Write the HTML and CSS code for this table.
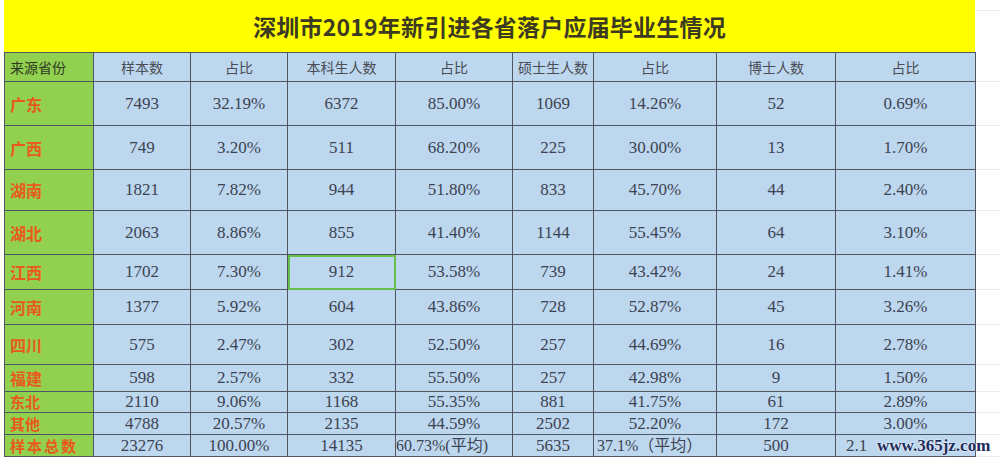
FILE: index.html
```html
<!DOCTYPE html>
<html lang="zh-CN">
<head>
<meta charset="utf-8">
<title>深圳市2019年新引进各省落户应届毕业生情况</title>
<link rel="stylesheet" href="styles.css">
</head>
<body>
<div class="sheet">
  <div class="title-row">
    <div class="title">深圳市2019年新引进各省落户应届毕业生情况</div>
    <div class="ghost-title"></div>
  </div>
  <table class="grid">
    <colgroup>
      <col class="c1"><col class="c2"><col class="c3"><col class="c4"><col class="c5"><col class="c6"><col class="c7"><col class="c8"><col class="c9"><col class="cg">
    </colgroup>
    <tr class="r29 head">
      <td class="prov-head">来源省份</td><td>样本数</td><td>占比</td><td>本科生人数</td><td>占比</td><td>硕士生人数</td><td>占比</td><td>博士人数</td><td>占比</td><td class="ghost"></td>
    </tr>
    <tr class="r44">
      <td class="prov">广东</td><td>7493</td><td>32.19%</td><td>6372</td><td>85.00%</td><td>1069</td><td>14.26%</td><td>52</td><td>0.69%</td><td class="ghost"></td>
    </tr>
    <tr class="r44">
      <td class="prov">广西</td><td>749</td><td>3.20%</td><td>511</td><td>68.20%</td><td>225</td><td>30.00%</td><td>13</td><td>1.70%</td><td class="ghost"></td>
    </tr>
    <tr class="r41">
      <td class="prov">湖南</td><td>1821</td><td>7.82%</td><td>944</td><td>51.80%</td><td>833</td><td>45.70%</td><td>44</td><td>2.40%</td><td class="ghost"></td>
    </tr>
    <tr class="r45">
      <td class="prov">湖北</td><td>2063</td><td>8.86%</td><td>855</td><td>41.40%</td><td>1144</td><td>55.45%</td><td>64</td><td>3.10%</td><td class="ghost"></td>
    </tr>
    <tr class="r35">
      <td class="prov">江西</td><td>1702</td><td>7.30%</td><td class="sel">912</td><td>53.58%</td><td>739</td><td>43.42%</td><td>24</td><td>1.41%</td><td class="ghost"></td>
    </tr>
    <tr class="r35">
      <td class="prov">河南</td><td>1377</td><td>5.92%</td><td>604</td><td>43.86%</td><td>728</td><td>52.87%</td><td>45</td><td>3.26%</td><td class="ghost"></td>
    </tr>
    <tr class="r40">
      <td class="prov">四川</td><td>575</td><td>2.47%</td><td>302</td><td>52.50%</td><td>257</td><td>44.69%</td><td>16</td><td>2.78%</td><td class="ghost"></td>
    </tr>
    <tr class="r27">
      <td class="prov">福建</td><td>598</td><td>2.57%</td><td>332</td><td>55.50%</td><td>257</td><td>42.98%</td><td>9</td><td>1.50%</td><td class="ghost"></td>
    </tr>
    <tr class="r21 short">
      <td class="prov">东北</td><td>2110</td><td>9.06%</td><td>1168</td><td>55.35%</td><td>881</td><td>41.75%</td><td>61</td><td>2.89%</td><td class="ghost"></td>
    </tr>
    <tr class="r22 short">
      <td class="prov">其他</td><td>4788</td><td>20.57%</td><td>2135</td><td>44.59%</td><td>2502</td><td>52.20%</td><td>172</td><td>3.00%</td><td class="ghost"></td>
    </tr>
    <tr class="r23 short">
      <td class="prov total">样本总数</td><td>23276</td><td>100.00%</td><td>14135</td><td class="wide">60.73%(平均)</td><td>5635</td><td class="left">37.1%（平均）</td><td>500</td><td class="under">2.1</td><td class="ghost"></td>
    </tr>
  </table>
  <div class="watermark">www.365jz.com</div>
</div>
</body>
</html>
```
FILE: styles.css
```css
html, body {
  margin: 0;
  padding: 0;
  background: #ffffff;
}

.sheet {
  position: relative;
  width: 1000px;
  height: 462px;
  overflow: hidden;
  padding-left: 4px;
  box-sizing: border-box;
}

.title-row {
  display: flex;
  height: 52px;
}

.title {
  width: 971px;
  height: 52px;
  background: #ffff00;
  display: flex;
  align-items: center;
  justify-content: center;
  font-family: "Noto Sans CJK SC", sans-serif;
  font-weight: 700;
  font-size: 23px;
  color: #3d3a22;
  letter-spacing: 0.2px;
}

.ghost-title {
  flex: 1;
  margin-top: 10px;
  border-top: 1px solid #ececec;
  height: 42px;
}

.grid {
  border-collapse: collapse;
  table-layout: fixed;
  width: 996px;
}

.c1 { width: 89px; }
.c2 { width: 97px; }
.c3 { width: 97px; }
.c4 { width: 108px; }
.c5 { width: 117px; }
.c6 { width: 81px; }
.c7 { width: 123px; }
.c8 { width: 119px; }
.c9 { width: 140px; }
.cg { width: 25px; }

.grid td {
  border: 1px solid #4f5862;
  background: #bdd7ee;
  padding: 0;
  text-align: center;
  vertical-align: middle;
  font-family: "Liberation Serif", "Noto Sans CJK SC", serif;
  font-size: 17px;
  line-height: 16px;
  color: #3c4352;
  white-space: nowrap;
  overflow: visible;
}

.grid td.ghost {
  background: #ffffff;
  border-left: none;
  border-right: none;
  border-top: none;
  border-bottom: 1px solid #ececec;
}

.r29 { height: 29px; }
.r44 { height: 44px; }
.r41 { height: 41px; }
.r45 { height: 44px; }
.r35 { height: 35px; }
.r40 { height: 40px; }
.r27 { height: 27px; }
.r21 { height: 21px; }
.r22 { height: 22px; }
.r23 { height: 22px; }

.head td {
  font-family: "Noto Sans CJK SC", sans-serif;
  font-size: 14px;
  color: #4a4d55;
}

.grid td.prov,
.grid td.prov-head {
  background: #92d050;
  text-align: left;
  padding-left: 5px;
}

.grid td.prov {
  font-family: "Noto Sans CJK SC", sans-serif;
  font-weight: 700;
  font-size: 16px;
  color: #e85a1c;
}

.short td.prov {
  font-size: 15px;
}

.grid td.prov-head {
  color: #2f3a22;
  font-size: 14px;
}

.grid td.total {
  letter-spacing: 2px;
}

.grid td.sel {
  outline: 2px solid #66bf4a;
  outline-offset: -2px;
}

.grid td.wide {
  text-align: left;
  padding-left: 0;
  font-size: 16px;
}

.grid td.left {
  text-align: left;
  padding-left: 3px;
  font-size: 16px;
}

.grid td.under {
  text-align: left;
  padding-left: 10px;
}

.watermark {
  position: absolute;
  left: 874px;
  top: 436px;
  padding: 0 3px;
  line-height: 19px;
  font-family: "Liberation Serif", serif;
  font-weight: 700;
  font-size: 17px;
  color: #1c2c5c;
  text-shadow: 0 0 2px #ffffff, 0 0 1px #ffffff;
}
```
